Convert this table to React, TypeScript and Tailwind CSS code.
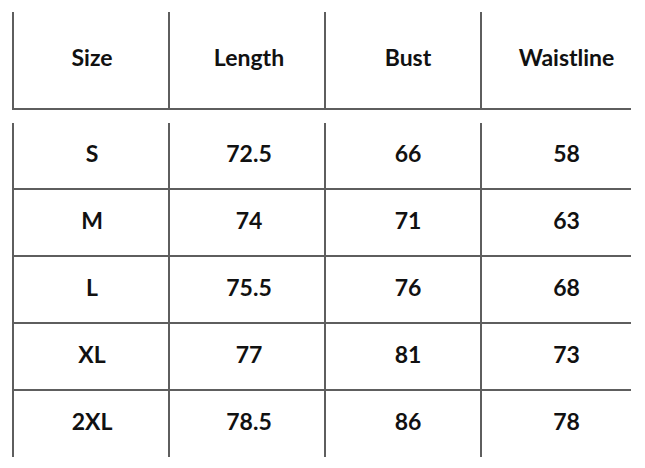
import React from "react";

const header = ["Size", "Length", "Bust", "Waistline"];
const rows = [
  ["S", "72.5", "66", "58"],
  ["M", "74", "71", "63"],
  ["L", "75.5", "76", "68"],
  ["XL", "77", "81", "73"],
  ["2XL", "78.5", "86", "78"],
];

const colCls = [
  "w-[156px] pl-[2px]",
  "w-[156px] pl-[4px]",
  "w-[156px] pl-[10px]",
  "w-[151px] pl-[20px]",
];

function Row({ cells, h, last }: { cells: string[]; h: string; last?: boolean }) {
  return (
    <div className={`flex ${h}`}>
      {cells.map((c, i) => (
        <div
          key={i}
          className={`${colCls[i]} flex items-center justify-center pb-[5px] border-l-2 border-[#5e5e5e] ${
            last ? "" : "border-b-2"
          }`}
        >
          <span>{c}</span>
        </div>
      ))}
    </div>
  );
}

export default function App() {
  return (
    <div
      className="w-[645px] h-[468px] bg-white text-[#111] text-[23px] font-bold overflow-hidden"
      style={{ fontFamily: '"Comic Sans MS", "Lato", "DejaVu Sans", sans-serif' }}
    >
      <div className="pt-[12px] pl-[12px]">
        <Row cells={header} h="h-[98px]" />
        <div className="h-[13px]" />
        {rows.map((r, i) => (
          <Row key={i} cells={r} h={i === 4 ? "h-[66px]" : "h-[67px]"} last={i === 4} />
        ))}
      </div>
    </div>
  );
}
